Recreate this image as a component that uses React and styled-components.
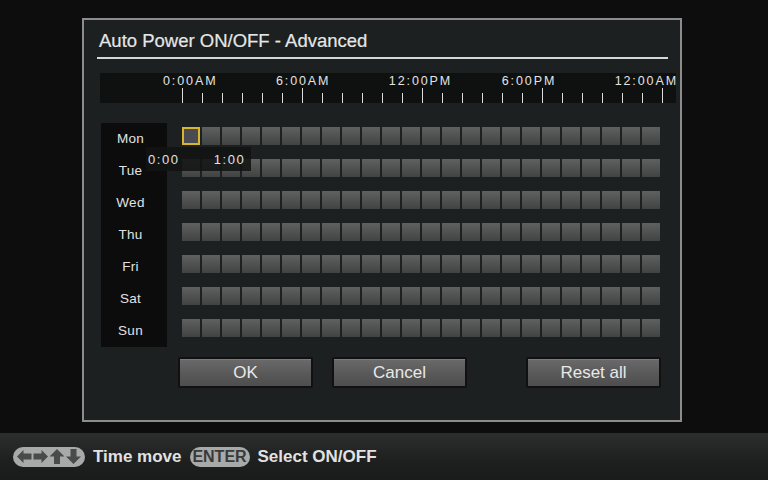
import styled, { createGlobalStyle } from "styled-components";

const DAYS = ["Mon", "Tue", "Wed", "Thu", "Fri", "Sat", "Sun"];
const HOURS = 24;
const LABELS = ["0:00AM", "6:00AM", "12:00PM", "6:00PM"];

const GlobalStyle = createGlobalStyle`
  html, body {
    margin: 0;
    padding: 0;
    background: #0d0d0d;
  }
  * {
    box-sizing: border-box;
  }
`;

function ArrowKeys() {
  return (
    <svg width="64" height="15" viewBox="0 0 64 15">
      <g fill="#4a4a4a">
        <polygon points="0,7.5 6.5,1 6.5,4.5 14.5,4.5 14.5,10.5 6.5,10.5 6.5,14" />
        <polygon points="31,7.5 24.5,1 24.5,4.5 16.5,4.5 16.5,10.5 24.5,10.5 24.5,14" />
        <polygon points="40,0 47.5,7.5 43,7.5 43,15 37,15 37,7.5 32.5,7.5" />
        <polygon points="56.5,15 64,7.5 59.5,7.5 59.5,0 53.5,0 53.5,7.5 49,7.5" />
      </g>
    </svg>
  );
}

function App() {
  return (
    <Screen>
      <GlobalStyle />
      <Stage>
        <Dialog>
          <Title>Auto Power ON/OFF - Advanced</Title>
          <Rule />

          <Timeline>
            <LabelRow>
              {LABELS.map((l) => (
                <TimeLabel key={l}>{l}</TimeLabel>
              ))}
              <TimeLabel $last>12:00AM</TimeLabel>
            </LabelRow>
            <TickRow>
              {Array.from({ length: HOURS + 1 }).map((_, i) => (
                <Tick key={i} $major={i % 6 === 0} />
              ))}
            </TickRow>
          </Timeline>

          <Board>
            <DayColumn>
              {DAYS.map((d) => (
                <DayLabel key={d}>{d}</DayLabel>
              ))}
            </DayColumn>
            <CellGrid>
              {DAYS.map((d, r) =>
                Array.from({ length: HOURS }).map((_, c) => (
                  <Cell key={`${d}-${c}`} $active={r === 0 && c === 0} />
                ))
              )}
            </CellGrid>
            <RangeTip>
              <span>0:00</span>
              <span>1:00</span>
            </RangeTip>
          </Board>

          <ButtonRow>
            <Button>OK</Button>
            <Button>Cancel</Button>
            <Button $push>Reset all</Button>
          </ButtonRow>
        </Dialog>
      </Stage>

      <HelpBar>
        <KeyPill $wide>
          <ArrowKeys />
        </KeyPill>
        <HelpText>Time move</HelpText>
        <KeyPill>ENTER</KeyPill>
        <HelpText>Select ON/OFF</HelpText>
      </HelpBar>
    </Screen>
  );
}

/* ─── Styled Components ─── */

const Screen = styled.div`
  width: 768px;
  height: 480px;
  display: flex;
  flex-direction: column;
  background: #0d0d0d;
  font-family: "Liberation Sans", Arial, sans-serif;
  overflow: hidden;
`;

const Stage = styled.div`
  height: 433px;
  padding: 18px 0 0 82px;
`;

const Dialog = styled.div`
  width: 600px;
  height: 404px;
  border: 2px solid #8c8c8c;
  background: #1c2020;
  display: flex;
  flex-direction: column;
`;

const Title = styled.div`
  font-size: 18.5px;
  line-height: 20px;
  color: #e6e6e6;
  padding: 11px 0 0 15px;
  -webkit-text-stroke: 0.2px #e6e6e6;
`;

const Rule = styled.div`
  height: 2px;
  width: 571px;
  margin: 6px 0 0 13px;
  background: #d6d8d8;
`;

const Timeline = styled.div`
  width: 576px;
  height: 30px;
  margin: 14px 0 0 16px;
  background: #0f1010;
  display: flex;
  flex-direction: column;
  justify-content: space-between;
`;

const LabelRow = styled.div`
  display: flex;
  padding: 1px 0 0 63px;
`;

const TimeLabel = styled.span`
  width: ${(p) => (p.$last ? "auto" : "119px")};
  margin-left: ${(p) => (p.$last ? "auto" : "0")};
  margin-right: ${(p) => (p.$last ? "-2px" : "0")};
  font-size: 12.5px;
  line-height: 14px;
  letter-spacing: 1.9px;
  color: #e4e4e4;
`;

const TickRow = styled.div`
  display: flex;
  align-items: flex-end;
  padding-left: 82px;
`;

const Tick = styled.div`
  width: 20px;
  height: ${(p) => (p.$major ? "15px" : "10px")};
  flex-shrink: 0;
  border-left: 1px solid #dcdcdc;
  &:last-child {
    width: 1px;
  }
`;

const Board = styled.div`
  position: relative;
  display: flex;
  margin: 20px 0 0 17px;
`;

const DayColumn = styled.div`
  width: 66px;
  padding-right: 7px;
  background: #0c0c0c;
  display: flex;
  flex-direction: column;
`;

const DayLabel = styled.div`
  height: 32px;
  line-height: 32px;
  text-align: center;
  font-size: 13.5px;
  letter-spacing: 0.3px;
  color: #e2e2e2;
`;

const CellGrid = styled.div`
  display: grid;
  grid-template-columns: repeat(24, 18px);
  grid-auto-rows: 18px;
  column-gap: 2px;
  row-gap: 14px;
  padding-top: 4px;
  margin-left: 15px;
`;

const Cell = styled.div`
  background: ${(p) =>
    p.$active ? "#4a4b52" : "linear-gradient(#5f6060, #414242)"};
  border: ${(p) => (p.$active ? "2px solid #d8b52c" : "none")};
`;

const RangeTip = styled.div`
  position: absolute;
  left: 45px;
  top: 24px;
  width: 105px;
  height: 24px;
  background: rgba(18, 19, 19, 0.88);
  display: flex;
  align-items: center;
  gap: 34px;
  padding-left: 2px;
  font-size: 13px;
  letter-spacing: 1.6px;
  color: #e2e2e2;
`;

const ButtonRow = styled.div`
  display: flex;
  gap: 19px;
  margin-top: 10px;
  padding: 0 19px 0 94px;
`;

const Button = styled.button`
  width: 135px;
  height: 31px;
  margin-left: ${(p) => (p.$push ? "auto" : "0")};
  border: 2px solid #111;
  border-radius: 2px;
  background: linear-gradient(#6a6a6a, #575757 60%, #4e4e4e);
  box-shadow: inset 0 1px 0 rgba(255, 255, 255, 0.12);
  font-family: "Liberation Sans", Arial, sans-serif;
  font-size: 17px;
  color: #e8e8e8;
  padding: 0;
`;

const HelpBar = styled.div`
  flex: 1;
  display: flex;
  align-items: center;
  gap: 8px;
  padding: 0 0 0 13px;
  background: linear-gradient(#2c2d2d, #1e1f1f 60%, #1a1a1a);
`;

const KeyPill = styled.div`
  height: 20px;
  width: ${(p) => (p.$wide ? "72px" : "60px")};
  border-radius: 10px;
  background: #a8a9a9;
  display: flex;
  align-items: center;
  justify-content: center;
  font-size: 16px;
  font-weight: bold;
  color: #383939;
`;

const HelpText = styled.span`
  font-size: 17px;
  font-weight: bold;
  color: #e2e2e2;
`;

export default App;
